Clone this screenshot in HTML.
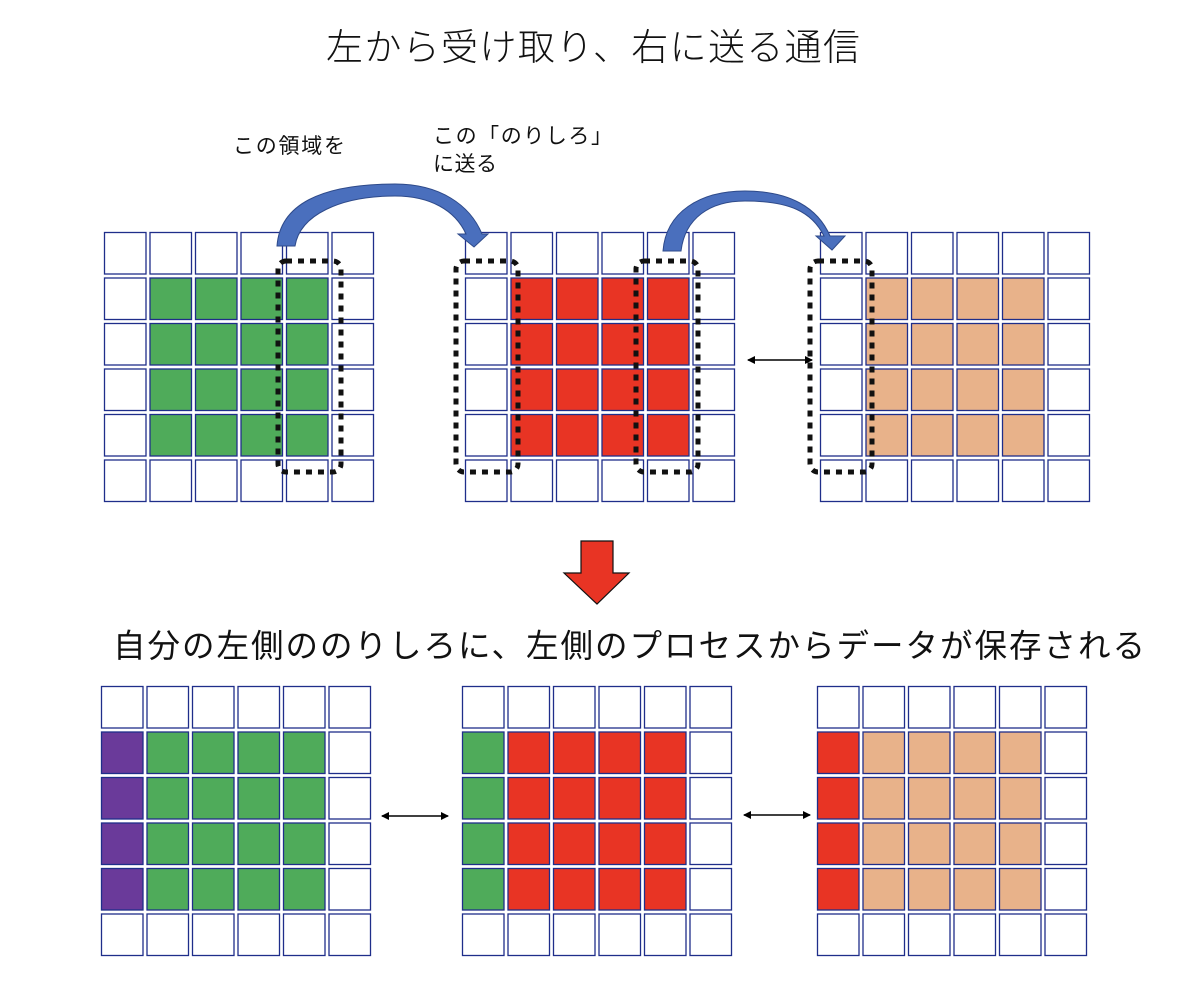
<!DOCTYPE html>
<html><head><meta charset="utf-8"><style>
html,body{margin:0;padding:0;background:#fff;width:1200px;height:988px;overflow:hidden}
text{font-family:"Liberation Sans","Noto Sans CJK JP",sans-serif;fill:#111}
</style></head><body>
<svg id="s" width="1200" height="988" viewBox="0 0 1200 988" xmlns="http://www.w3.org/2000/svg">
<defs>
<marker id="ah" markerWidth="8" markerHeight="8" refX="7" refY="4" orient="auto-start-reverse" markerUnits="userSpaceOnUse"><path d="M0,0 L8,4 L0,8 z" fill="#000"/></marker>
</defs>
<text x="326" y="60" font-size="37" textLength="534" font-weight="300">左から受け取り、右に送る通信</text>
<text x="233" y="153" font-size="21" textLength="112">この領域を</text>
<text x="433" y="143" font-size="21" textLength="179">この「のりしろ」</text>
<text x="433" y="171" font-size="21" textLength="64">に送る</text>
<text x="113" y="657" font-size="32.5" textLength="1032">自分の左側ののりしろに、左側のプロセスからデータが保存される</text>
<g id="cells"></g>
<path d="M277,246 C280,205 320,184 395,184 C440,184 470,205 482,234 L488,234 L474,247 L458,234 L466,234 C455,210 430,196 395,196 C340,196 300,215 295,246 Z" fill="#4a6fbd" stroke="#2e4a8a" stroke-width="1"/>
<path d="M663,251 C666,212 700,191 745,191 C790,191 818,208 830,236 L845,236 L832,250 L816,236 L824,236 C812,212 790,201 745,201 C710,201 685,218 681,251 Z" fill="#4a6fbd" stroke="#2e4a8a" stroke-width="1"/>
<g fill="none" stroke="#111" stroke-width="5" stroke-dasharray="6,6">
<rect x="278" y="261" width="63" height="211" rx="8"/>
<rect x="456" y="261" width="62" height="211" rx="8"/>
<rect x="636" y="261" width="62" height="211" rx="8"/>
<rect x="810" y="261" width="62" height="211" rx="8"/>
</g>
<g stroke="#000" stroke-width="1.5" marker-start="url(#ah)" marker-end="url(#ah)">
<line x1="748" y1="360" x2="812" y2="360"/>
<line x1="382" y1="816" x2="448" y2="816"/>
<line x1="744" y1="815" x2="810" y2="815"/>
</g>
<path d="M581,541 L613,541 L613,573 L629,573 L597,604 L564,573 L581,573 Z" fill="#e83424" stroke="#111" stroke-width="1.2"/>
</svg>
<script>
var G='#4fab5a',R='#e83424',P='#e8b28a',V='#6a3a9a';
var g=document.getElementById('cells'),h='';
function grid(x0,y0,fn){for(var r=0;r<6;r++)for(var c=0;c<6;c++){var f=fn(r,c)||'#fff';h+='<rect x="'+(x0+c*45.5+0.5)+'" y="'+(y0+r*45.5+0.5)+'" width="41.5" height="41.5" fill="'+f+'" stroke="#1f2e8a" stroke-width="1.3"/>';}}
function inner(col){return function(r,c){return (r>=1&&r<=4&&c>=1&&c<=4)?col:null}}
grid(104,232,inner(G));grid(465,232,inner(R));grid(820,232,inner(P));
function bot(col,left){return function(r,c){if(r>=1&&r<=4){if(c==0)return left;if(c<=4)return col}return null}}
grid(101,686,bot(G,V));grid(462,686,bot(R,G));grid(817,686,bot(P,R));
g.innerHTML=h;
</script>
</body></html>
